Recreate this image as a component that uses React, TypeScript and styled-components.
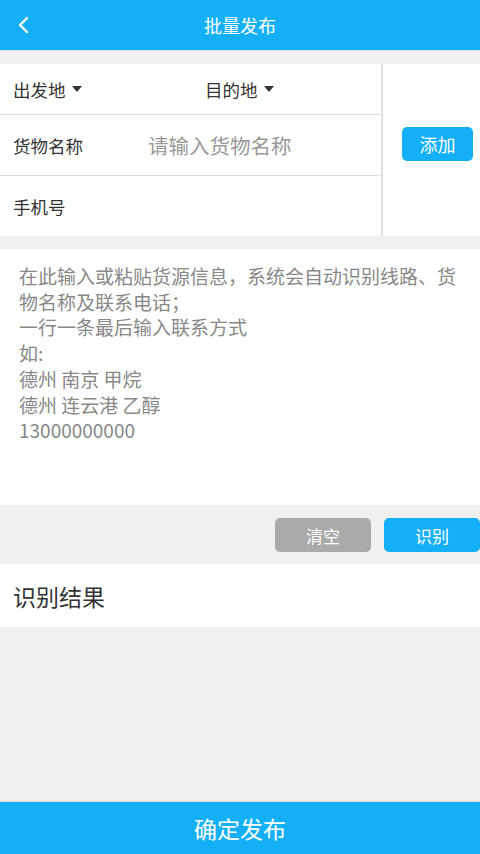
import React from "react";
import styled, { createGlobalStyle } from "styled-components";

const Global = createGlobalStyle`
  html, body { margin: 0; padding: 0; background: #f0f0f0; }
  * { box-sizing: border-box; }
  body { font-family: "Noto Sans CJK SC", "Noto Sans", sans-serif; }
`;

const BLUE = "#14b0f7";

const Page = styled.div`
  width: 480px;
  height: 854px;
  display: flex;
  flex-direction: column;
  background: #f0f0f0;
`;

const Header = styled.header`
  height: 51px;
  background: ${BLUE};
  position: relative;
  display: flex;
  align-items: center;
  justify-content: center;
  border-bottom: 1px solid #dcdcdc;
`;

const Title = styled.h1`
  margin: 0;
  color: #fff;
  font-size: 18px;
  font-weight: 400;
`;

const Back = styled.button`
  position: absolute;
  left: 12px;
  top: 13px;
  width: 22px;
  height: 24px;
  padding: 0;
  border: 0;
  background: none;
  display: flex;
  align-items: center;
  justify-content: center;
`;

const Gap = styled.div<{ h: number }>`
  height: ${(p) => p.h}px;
`;

const Form = styled.section`
  display: grid;
  grid-template-columns: 383px 1fr;
  background: #fff;
`;

const Fields = styled.div`
  display: flex;
  flex-direction: column;
  border-right: 2px solid #e0e0e0;
`;

const Row = styled.div<{ h: number; last?: boolean }>`
  height: ${(p) => p.h}px;
  display: flex;
  align-items: center;
  padding-left: 13px;
  border-bottom: ${(p) => (p.last ? "none" : "1px solid #dedede")};
`;

const Label = styled.span<{ w?: number }>`
  font-size: 17.5px;
  color: #333;
  width: ${(p) => (p.w ? `${p.w}px` : "auto")};
  display: inline-flex;
  align-items: center;
  gap: 4px;
`;

const Caret = styled.span`
  width: 0;
  height: 0;
  border-left: 5.5px solid transparent;
  border-right: 5.5px solid transparent;
  border-top: 6px solid #333;
  margin-left: 2px;
`;

const Placeholder = styled.span`
  font-size: 20.5px;
  color: #999;
`;

const Side = styled.div`
  display: flex;
  align-items: center;
  justify-content: center;
  padding: 0 0 12px 12px;
`;

const Btn = styled.button<{ bg: string; w: number; size: number }>`
  width: ${(p) => p.w}px;
  height: 34px;
  border: 0;
  border-radius: 5px;
  background: ${(p) => p.bg};
  color: #fff;
  font-family: inherit;
  font-weight: 400;
  font-size: ${(p) => p.size}px;
  padding: 0;
`;

const TextArea = styled.div`
  height: 256px;
  background: #fff;
  padding: 14px 19px 0 19px;
  font-size: 19px;
  line-height: 25.7px;
  color: #888;
`;

const Line = styled.div``;

const Actions = styled.div`
  height: 59px;
  display: flex;
  align-items: center;
  justify-content: flex-end;
  gap: 13px;
  padding-top: 1px;
`;

const Result = styled.section`
  height: 63px;
  background: #fff;
  display: flex;
  align-items: center;
  padding-left: 13px;
  font-size: 23px;
  color: #333;
`;

const Filler = styled.div`
  flex: 1;
`;

const Footer = styled.button`
  height: 53px;
  background: ${BLUE};
  border: 0;
  border-top: 1px solid #d8d8d8;
  color: #fff;
  font-family: inherit;
  font-weight: 400;
  font-size: 23px;
  padding: 0;
`;

export default function App() {
  return (
    <Page>
      <Global />
      <Header>
        <Back aria-label="返回">
          <svg width="14" height="20" viewBox="0 0 14 20">
            <path d="M11 3 L4 10 L11 17" fill="none" stroke="#fff" strokeWidth="2.4" strokeLinecap="round" strokeLinejoin="round" />
          </svg>
        </Back>
        <Title>批量发布</Title>
      </Header>
      <Gap h={13} />
      <Form>
        <Fields>
          <Row h={51}>
            <Label w={192}>
              出发地<Caret />
            </Label>
            <Label>
              目的地<Caret />
            </Label>
          </Row>
          <Row h={61}>
            <Label w={135}>货物名称</Label>
            <Placeholder>请输入货物名称</Placeholder>
          </Row>
          <Row h={60} last>
            <Label>手机号</Label>
          </Row>
        </Fields>
        <Side>
          <Btn bg={BLUE} w={71} size={18}>添加</Btn>
        </Side>
      </Form>
      <Gap h={13} />
      <TextArea>
        <Line>在此输入或粘贴货源信息，系统会自动识别线路、货物名称及联系电话；</Line>
        <Line>一行一条最后输入联系方式</Line>
        <Line>如:</Line>
        <Line>德州 南京 甲烷</Line>
        <Line>德州 连云港 乙醇</Line>
        <Line>13000000000</Line>
      </TextArea>
      <Actions>
        <Btn bg="#aaaaaa" w={96} size={17}>清空</Btn>
        <Btn bg={BLUE} w={96} size={17}>识别</Btn>
      </Actions>
      <Result>识别结果</Result>
      <Filler />
      <Footer>确定发布</Footer>
    </Page>
  );
}
